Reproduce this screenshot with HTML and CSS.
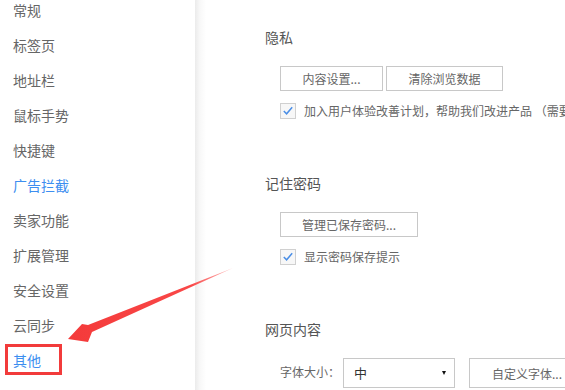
FILE: index.html
```html
<!DOCTYPE html>
<html lang="zh-CN">
<head>
  <meta charset="UTF-8" />
  <meta name="viewport" content="width=device-width, initial-scale=1.0"/>
  <title>设置</title>
  <link rel="stylesheet" href="styles.css">
</head>
<body>

  <div class="page">
    <ul class="sidebar">
      <li>常规</li>
      <li>标签页</li>
      <li>地址栏</li>
      <li>鼠标手势</li>
      <li>快捷键</li>
      <li class="active">广告拦截</li>
      <li>卖家功能</li>
      <li>扩展管理</li>
      <li>安全设置</li>
      <li>云同步</li>
      <li class="active marked">其他</li>
    </ul>

    <div class="content">
      <div class="section">
        <h3>隐私</h3>
        <div class="btn-row">
          <button class="btn btn-content">内容设置...</button>
          <button class="btn btn-clear">清除浏览数据</button>
        </div>
        <label class="check">
          <span class="box">
            <svg width="15" height="15" viewBox="0 0 15 15"><path d="M3 7.5 L6 10.5 L12 3.5" fill="none" stroke="#4a8ee6" stroke-width="1.6"/></svg>
          </span>
          <span>加入用户体验改善计划，帮助我们改进产品 （需要</span>
        </label>
      </div>

      <div class="section">
        <h3>记住密码</h3>
        <div class="btn-row">
          <button class="btn btn-pwd">管理已保存密码...</button>
        </div>
        <label class="check">
          <span class="box">
            <svg width="15" height="15" viewBox="0 0 15 15"><path d="M3 7.5 L6 10.5 L12 3.5" fill="none" stroke="#4a8ee6" stroke-width="1.6"/></svg>
          </span>
          <span>显示密码保存提示</span>
        </label>
      </div>

      <div class="section">
        <h3>网页内容</h3>
        <div class="font-row">
          <span class="font-label">字体大小：</span>
          <div class="select">
            <span>中</span>
            <span class="caret"></span>
          </div>
          <button class="btn btn-font">自定义字体...</button>
        </div>
      </div>
    </div>

    <svg class="arrow" width="565" height="390" viewBox="0 0 565 390">
      <defs>
        <linearGradient id="fade" x1="233" y1="268" x2="68" y2="339" gradientUnits="userSpaceOnUse">
          <stop offset="0" stop-color="#ffc4c4"/>
          <stop offset="0.25" stop-color="#f94848"/>
          <stop offset="1" stop-color="#f43a3a"/>
        </linearGradient>
      </defs>
      <polygon points="233,268 88,325 82,324 68,339 88,342 92,332" fill="url(#fade)"/>
    </svg>
  </div>

</body>
</html>
```

FILE: styles.css
```css
* {
  margin: 0;
  padding: 0;
  box-sizing: border-box;
}

body, html {
  height: 100%;
  overflow: hidden;
  font-family: "Noto Sans CJK SC", "Noto Sans", sans-serif;
  background: #fff;
}

.page {
  position: relative;
  display: flex;
  height: 100%;
}

.sidebar {
  width: 195px;
  flex-shrink: 0;
  list-style: none;
  margin-top: -7px;
}

.sidebar li {
  height: 35px;
  line-height: 35px;
  padding-left: 13px;
  font-size: 14px;
  color: #666;
}

.sidebar li.active {
  color: #3d8ef0;
}

.sidebar li.marked {
  position: relative;
}

/* red marker around the current item */
.sidebar li.marked::after {
  content: "";
  position: absolute;
  left: 5px;
  top: 1px;
  width: 51px;
  height: 25px;
  border: 3px solid #f23b3b;
}

.content {
  flex: 1;
  padding: 27px 0 0 70px;
  background: linear-gradient(to right, #ebebeb, #f8f8f8 5px, #fff 11px);
}

.section {
  margin-bottom: 55px;
}

.section h3 {
  font-size: 14px;
  font-weight: normal;
  line-height: 20px;
  color: #555;
  margin-bottom: 19px;
}

.btn-row {
  display: flex;
  gap: 3px;
  padding-left: 15px;
  margin-bottom: 12px;
}

.btn {
  height: 25px;
  background: #fff;
  border: 1px solid #c8c8c8;
  font-family: inherit;
  font-size: 12px;
  color: #666;
}

.btn-content { width: 103px; }
.btn-clear { width: 117px; }
.btn-pwd { width: 138px; }

.check {
  display: flex;
  align-items: center;
  gap: 8px;
  padding-left: 15px;
  height: 15px;
  font-size: 12px;
  color: #666;
  white-space: nowrap;
}

.box {
  width: 16px;
  height: 16px;
  border: 1px solid #d0d0d0;
  background: #f7f7f7;
  display: flex;
}

.box svg {
  display: block;
  width: 14px;
  height: 14px;
}

.font-row {
  display: flex;
  align-items: flex-start;
  padding-left: 15px;
  white-space: nowrap;
  font-size: 12px;
  color: #666;
}

.font-label {
  width: 63px;
  line-height: 28px;
}

.select {
  position: relative;
  width: 112px;
  height: 30px;
  border: 1px solid #c8c8c8;
  padding-left: 10px;
  line-height: 28px;
  color: #333;
  font-size: 13px;
}

.caret {
  position: absolute;
  right: 8px;
  top: 12px;
  border-left: 2.5px solid transparent;
  border-right: 2.5px solid transparent;
  border-top: 4px solid #111;
}

.btn-font {
  width: 120px;
  height: 30px;
  margin-left: 14px;
  text-align: left;
  padding-left: 22px;
}

.arrow {
  position: absolute;
  left: 0;
  top: 0;
  pointer-events: none;
}
```
